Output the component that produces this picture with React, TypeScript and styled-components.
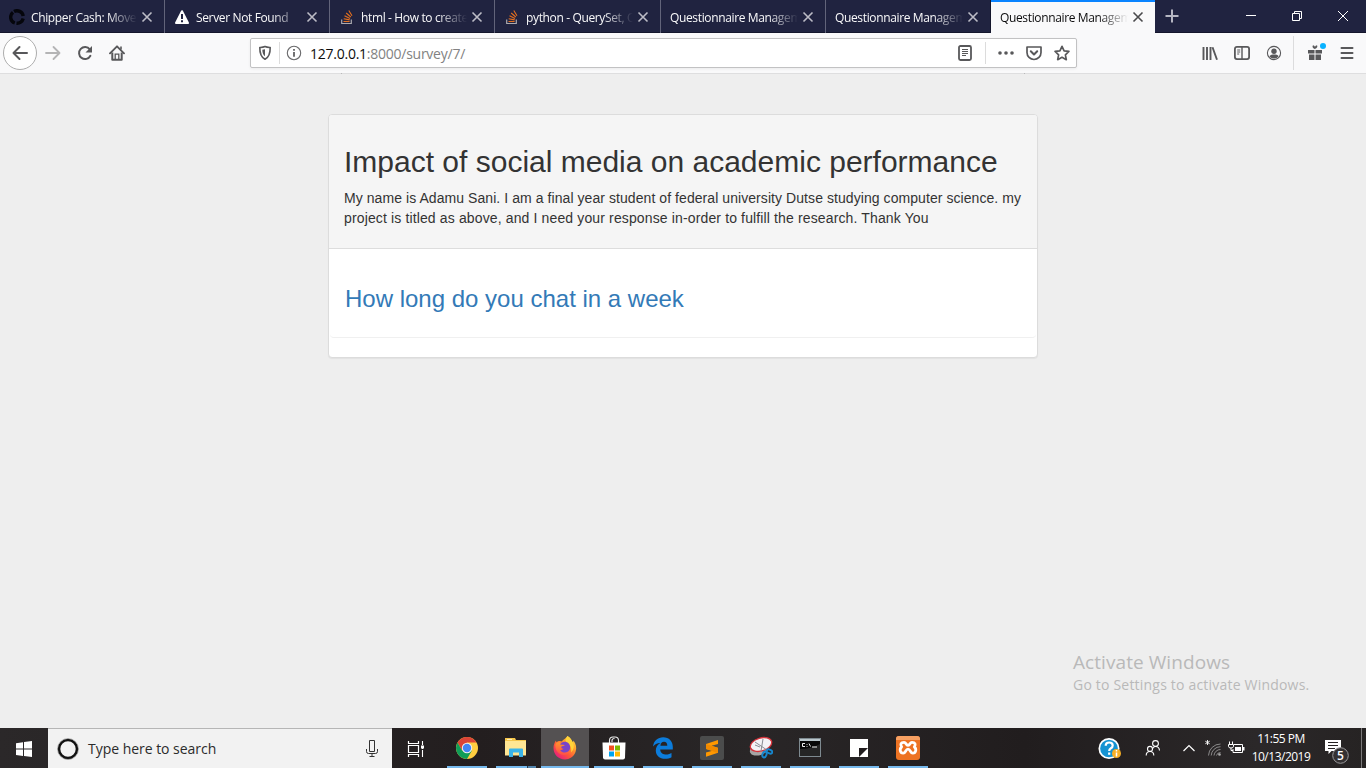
import React from "react";
import styled, { createGlobalStyle } from "styled-components";

const GlobalStyle = createGlobalStyle`
  * { box-sizing: border-box; }
  body { margin: 0; background: #eee; overflow: hidden; }
`;

const ui = `"Open Sans", "Noto Sans", sans-serif`;

const Screen = styled.div`
  width: 1366px;
  height: 768px;
  display: flex;
  flex-direction: column;
  overflow: hidden;
  font-family: ${ui};
`;

/* Tab strip */
const TabStrip = styled.div`
  height: 33px;
  display: flex;
  background: #202340;
  border-bottom: 1px solid #14162c;
`;

const TabBox = styled.div<{ $active?: boolean; $width: number; $last?: boolean }>`
  flex: none;
  width: ${(p) => p.$width}px;
  height: 33px;
  padding: 1px 7px 0 9px;
  display: flex;
  align-items: center;
  color: ${(p) => (p.$active ? "#0c0c0d" : "#f9f9fa")};
  background: ${(p) => (p.$active ? "#f9f9fa" : "transparent")};
  border-right: ${(p) => (p.$active ? "0" : p.$last ? "1px solid #14162c" : "1px solid #62647a")};
  box-shadow: ${(p) => (p.$active ? "inset 0 2px 0 #0a84ff" : "none")};
`;

const Favicon = styled.span`
  flex: none;
  width: 16px;
  height: 16px;
  margin-right: 6px;
  display: flex;
`;

const TabTitle = styled.span`
  flex: 1;
  min-width: 0;
  padding-top: 2px;
  overflow: hidden;
  white-space: nowrap;
  font-size: 12px;
  line-height: 18px;
  letter-spacing: -0.36px;
  mask-image: linear-gradient(to left, transparent 0, #000 30px);
`;

const CloseBox = styled.span`
  flex: none;
  width: 20px;
  height: 20px;
  display: flex;
  align-items: center;
  justify-content: center;
`;

const NewTab = styled.div`
  width: 34px;
  display: flex;
  align-items: center;
  justify-content: center;
`;

const WindowButtons = styled.div`
  margin-left: auto;
  display: flex;
`;

const WindowButton = styled.div`
  width: 46px;
  height: 32px;
  display: flex;
  align-items: center;
  justify-content: center;
`;

/* Navigation bar */
const NavBar = styled.div`
  height: 41px;
  flex: none;
  display: flex;
  align-items: center;
  padding: 0 3px 1px 3px;
  background: #f9f9fa;
  border-bottom: 1px solid #dededf;
`;

const ToolButton = styled.div<{ $width?: number }>`
  flex: none;
  width: ${(p) => p.$width ?? 32}px;
  height: 32px;
  display: flex;
  align-items: center;
  justify-content: center;
`;

const BackButton = styled(ToolButton)`
  width: 34px;
  height: 34px;
  border: 1px solid #adadad;
  border-radius: 50%;
  background: #fff;
`;

const BookmarkButton = styled(ToolButton)`
  width: 16px;
  margin: 0 6px 0 12px;
`;

const UrlBar = styled.div`
  width: 827px;
  height: 30px;
  margin-left: 117px;
  display: flex;
  align-items: center;
  background: #fff;
  border: 1px solid #c2c2c3;
  border-radius: 2px;
  box-shadow: 0 1px 3px rgba(0, 0, 0, 0.06);
`;

const UrlDivider = styled.span`
  width: 1px;
  height: 22px;
  background: #dcdcdc;
`;

const UrlText = styled.span`
  flex: 1;
  margin-left: 2px;
  padding-top: 2px;
  font-size: 14px;
  line-height: 20px;
  letter-spacing: -0.25px;
  color: #828282;
  b { font-weight: 400; color: #0c0c0d; }
`;

const ToolGroup = styled.div`
  margin-left: auto;
  display: flex;
  align-items: center;
`;

const BarDivider = styled.span`
  width: 1px;
  height: 34px;
  margin: 0 5px 0 3px;
  background: #dcdcdd;
`;

/* Page */
const Page = styled.main`
  position: relative;
  flex: 1;
  padding-top: 40px;
  background: #eee;
  font-family: "Liberation Sans", Arial, sans-serif;
`;

/* Bottom corners of the bar scrolled out above the panel */
const ScrolledEdge = styled.div`
  position: absolute;
  top: -1px;
  left: 341px;
  width: 684px;
  height: 1px;
  border: solid #b9b9ba;
  border-width: 0 1px;
`;

const Panel = styled.section`
  width: 710px;
  height: 244px;
  margin-left: 328px;
  background: #fff;
  border: 1px solid #dcdcdc;
  border-radius: 4px;
  box-shadow: 0 1px 1px rgba(0, 0, 0, 0.05);
`;

const PanelHeading = styled.header`
  height: 134px;
  padding: 30px 15px 0;
  background: #f5f5f5;
  border-bottom: 1px solid #ddd;
  border-radius: 3px 3px 0 0;
  color: #333;
`;

const Title = styled.h1`
  margin: 0 0 10px;
  font-size: 30px;
  font-weight: 400;
  line-height: 33px;
  white-space: nowrap;
`;

const Intro = styled.p`
  margin: 0;
  font-size: 14px;
  line-height: 20px;
  white-space: nowrap;
`;

const IntroLine = styled.span<{ $spacing: number }>`
  display: block;
  letter-spacing: ${(p) => p.$spacing}px;
`;

const Question = styled.div`
  height: 89px;
  margin: 0 1px;
  padding: 37px 15px 0;
  border-bottom: 1px solid #f0f0f0;
  border-radius: 0 0 4px 4px;
`;

const QuestionLink = styled.a`
  font-size: 24px;
  line-height: 26px;
  color: #337ab7;
`;

const Watermark = styled.div`
  position: absolute;
  left: 1073px;
  bottom: 33px;
  font-family: ${ui};
  color: #b9b9b9;
  white-space: nowrap;
`;

const WatermarkTitle = styled.div`
  font-size: 19px;
  line-height: 26px;
  letter-spacing: 0.07px;
`;

const WatermarkText = styled.div`
  font-size: 14px;
  line-height: 20px;
  letter-spacing: 0.2px;
`;

/* Taskbar */
const Taskbar = styled.footer`
  height: 40px;
  flex: none;
  display: flex;
  background: linear-gradient(90deg, #2b2829, #231e1f 35%, #292627 55%, #211d1e 75%, #2b2829 92%, #262323);
`;

const TaskCell = styled.div<{ $active?: boolean; $gap?: number }>`
  flex: none;
  width: 48px;
  height: 40px;
  margin-right: ${(p) => p.$gap ?? 0}px;
  display: flex;
  flex-direction: column;
  align-items: center;
  background: ${(p) => (p.$active ? "#545152" : "transparent")};
`;

const TaskIcon = styled.span`
  flex: 1;
  display: flex;
  align-items: center;
  padding-top: 2px;
`;

const Running = styled.span<{ $wide?: boolean; $stacked?: boolean }>`
  width: ${(p) => (p.$wide ? 48 : 40)}px;
  height: 2px;
  background: ${(p) => (p.$stacked ? "linear-gradient(90deg, #76b9ed 31px, #2a3b48 31px, #2a3b48 32px, #5385ad 32px)" : "#76b9ed")};
`;

const SearchBox = styled.div`
  flex: none;
  width: 344px;
  display: flex;
  align-items: center;
  padding: 0 12px 0 8px;
  background: #f2f2f2;
  border-top: 1px solid #b5b5b5;
  color: #2b2b2b;
`;

const SearchText = styled.span`
  flex: 1;
  margin-left: 8px;
  font-size: 14px;
  line-height: 20px;
  letter-spacing: -0.03px;
`;

const Tray = styled.div`
  margin-left: auto;
  display: flex;
  color: #fff;
`;

const TrayCell = styled.span<{ $width: number; $drop?: number }>`
  width: ${(p) => p.$width}px;
  padding-top: ${(p) => p.$drop ?? 0}px;
  display: flex;
  align-items: center;
  justify-content: center;
`;

const Clock = styled.div`
  width: 64px;
  padding-top: 2px;
  font-size: 12px;
  line-height: 18px;
  letter-spacing: -0.5px;
  text-align: center;
  white-space: nowrap;
`;

const DesktopEdge = styled.span`
  width: 5px;
  border-left: 1px solid #7b797a;
`;

const Drawing = styled.svg`
  display: block;
  flex: none;
`;

type SvgProps = { w?: number; h?: number; children: React.ReactNode };
const Svg = ({ w = 16, h = 16, children }: SvgProps) => (
  <Drawing width={w} height={h} viewBox={`0 0 ${w} ${h}`} fill="none">
    {children}
  </Drawing>
);

const INK = "#58585a";

const Close = ({ color }: { color: string }) => (
  <Svg w={12} h={12}><path d="M1.5 1.5 10.5 10.5M10.5 1.5 1.5 10.5" stroke={color} strokeWidth="1.6" /></Svg>
);

const ChipperIcon = () => (
  <Svg>
    <g stroke="#05060c" strokeWidth="3.4">
      <path d="M5.8 14A6.2 6.2 0 0 1 4 3.3" />
      <path d="M5 2.5A6.3 6.3 0 0 1 14.2 7" />
      <path d="M14.2 9.5A6.3 6.3 0 0 1 7.5 14.2" />
    </g>
  </Svg>
);

const WarningIcon = () => (
  <Svg>
    <path d="M8 2.2 14 14H2Z" fill="#fff" stroke="#fff" strokeWidth="2" strokeLinejoin="round" />
    <path d="M8 5v5M8 11.3v1.9" stroke="#202340" strokeWidth="2" />
  </Svg>
);

const StackIcon = () => (
  <Svg>
    <path d="M2.7 10.5v4h9.6v-4" stroke="#aaa9ae" strokeWidth="1.2" />
    <g stroke="#e5701f" strokeWidth="1.1">
      <path d="M4.5 12.5H10.6" />
      <path d="M4.7 9.7 10.7 10.9" />
      <path d="M5.5 6.8 11 9.4" />
      <path d="M7.2 4 11.8 8" />
      <path d="M9.8 1.5 13 6.8" />
    </g>
  </Svg>
);

const tabs: { title: string; icon?: React.ReactNode; width: number; active?: boolean; last?: boolean }[] = [
  { title: "Chipper Cash: Move", icon: <ChipperIcon />, width: 165 },
  { title: "Server Not Found", icon: <WarningIcon />, width: 165 },
  { title: "html - How to create", icon: <StackIcon />, width: 165 },
  { title: "python - QuerySet, O", icon: <StackIcon />, width: 166 },
  { title: "Questionnaire Managem", width: 165 },
  { title: "Questionnaire Managem", width: 165, last: true },
  { title: "Questionnaire Managem", width: 164, active: true },
];

const BackIcon = () => (
  <Svg><path d="M15 8H1.5M7.5 2 1.5 8l6 6" stroke={INK} strokeWidth="2" strokeLinecap="round" strokeLinejoin="round" /></Svg>
);
const ForwardIcon = () => (
  <Svg><path d="M1 8h13.5M8.5 2l6 6-6 6" stroke="#b4b4b5" strokeWidth="1.8" strokeLinecap="round" strokeLinejoin="round" /></Svg>
);
const ReloadIcon = () => (
  <Svg>
    <path d="M12.8 4.3A6 6 0 1 0 13.4 10.8" stroke={INK} strokeWidth="2" strokeLinecap="round" />
    <path d="M15 1v6.5H8.5Z" fill={INK} />
  </Svg>
);
const HomeIcon = () => (
  <Svg>
    <path d="M1 8.3 8 1.3l7 7" stroke={INK} strokeWidth="1.9" strokeLinecap="round" strokeLinejoin="round" />
    <path d="M3.3 7.5v7.3h9.4V7.5" stroke={INK} strokeWidth="2" strokeLinejoin="round" />
    <path d="M6.2 15V9.2h3.6V15" stroke={INK} strokeWidth="1.3" />
    <path d="M12 1.5v3" stroke={INK} strokeWidth="1.6" />
  </Svg>
);
const ShieldIcon = () => (
  <Svg>
    <path d="M8 1.5c-2 .9-3.7.9-5.2 1C2.7 9 4.2 12.3 8 14.3c3.8-2 5.3-5.3 5.2-11.8C11.7 2.4 10 2.4 8 1.5Z" stroke={INK} strokeWidth="1.6" strokeLinejoin="round" />
    <path d="M8 4.2c-1 .4-1.8.4-2.7.5.1 3.1.9 5.3 2.7 6.6Z" fill={INK} />
  </Svg>
);
const InfoIcon = () => (
  <Svg>
    <circle cx="8" cy="8" r="6.7" stroke="#6a6a6c" strokeWidth="1.1" />
    <path d="M8 7v4.8M8 4v1.8" stroke={INK} strokeWidth="1.7" />
  </Svg>
);
const ReaderIcon = () => (
  <Svg>
    <rect x="2" y="1" width="12" height="14" rx="1.5" stroke={INK} strokeWidth="1.8" />
    <path d="M5 4.5h6M5 6.5h6M5 8.5h6M5 10.5h4" stroke={INK} />
  </Svg>
);
const DotsIcon = () => (
  <Svg><g fill={INK}><circle cx="2" cy="8" r="1.8" /><circle cx="8" cy="8" r="1.8" /><circle cx="14" cy="8" r="1.8" /></g></Svg>
);
const PocketIcon = () => (
  <Svg>
    <path d="M1 2h14v5.5a7 7 0 0 1-14 0Z" stroke={INK} strokeWidth="1.7" strokeLinejoin="round" />
    <path d="m4.8 6.3 3.2 3.2 3.2-3.2" stroke={INK} strokeWidth="2" strokeLinecap="round" strokeLinejoin="round" />
  </Svg>
);
const StarIcon = () => (
  <Svg><path d="m8 1.3 2.1 4.5 4.8.6-3.5 3.4.9 4.9L8 12.300l-4.3 2.4.9-4.9L1.1 6.4l4.8-.6Z" stroke={INK} strokeWidth="1.7" strokeLinejoin="round" /></Svg>
);
const LibraryIcon = () => (
  <Svg><path d="M1.500 2v13M5 2v13M8.500 2v13M10.500 2.200l4.500 12.500" stroke={INK} strokeWidth="1.9" /></Svg>
);
const SidebarIcon = () => (
  <Svg>
    <rect x=".9" y="1.9" width="14.2" height="12.2" rx="2" stroke={INK} strokeWidth="1.8" />
    <path d="M8 2v12" stroke={INK} strokeWidth="1.4" />
    <path d="M3.2 5h3M3.2 7h3M3.2 9h2" stroke={INK} />
  </Svg>
);
const AccountIcon = () => (
  <Svg>
    <circle cx="8" cy="8" r="6.6" stroke={INK} strokeWidth="1.1" />
    <circle cx="8" cy="6.3" r="2.7" fill={INK} />
    <path d="M3.4 11.2c1-1.4 2.4-1.7 4.6-1.7s3.6.3 4.6 1.7A5.5 5.5 0 0 1 8 13.4a5.5 5.5 0 0 1-4.6-2.2Z" fill={INK} />
  </Svg>
);
const GiftIcon = () => (
  <Svg w={22} h={20}>
    <path d="M4 7h6.500v3.500H4ZM11.500 7H18v3.500h-6.500ZM5 11.500h5.500V17H5ZM11.500 11.500H17V17h-5.500Z" fill={INK} />
    <path d="M10.800 6C8.500 5.200 8 3.500 9 2.300c.9.1 1.700.8 2 1.700.3-.9 1-1.600 2-1.700.9 1.200.2 2.900-2.200 3.700Z" fill={INK} />
    <circle cx="19" cy="3" r="3" fill="#0ab2ff" />
  </Svg>
);
const MenuIcon = () => (
  <Svg><path d="M2.5 3h11M2.5 8h11M2.5 13h11" stroke={INK} strokeWidth="2" strokeLinecap="round" /></Svg>
);

const WindowsIcon = () => (
  <Svg><g fill="#fff"><path d="M0 2.2 7 1.2v6.4H0ZM8 1 16 0v7.6H8ZM0 8.6h7V15L0 14ZM8 8.600h8V16L8 15Z" /></g></Svg>
);
const CortanaIcon = () => (
  <Svg w={24} h={24}>
    <circle cx="12" cy="12" r="9" stroke="#111" strokeWidth="2.6" />
    <circle cx="12" cy="12" r="10.5" stroke="#8a8a8a" strokeWidth=".6" />
  </Svg>
);
const MicIcon = () => (
  <Svg w={16} h={18}>
    <path d="M5.500.500h5v11h-5Z" stroke="#333" />
    <path d="M2.5 9v2.5q0 2 2 2h7q2 0 2-2V9M8 13.5v3M5.5 16.5h5" stroke="#333" />
  </Svg>
);
const TaskViewIcon = () => (
  <Svg w={18} h={18}>
    <path d="M1.5 1v2.5h10V1M1.5 17v-2.5h10V17M1.5 5.5h10v7h-10Z" stroke="#fff" strokeWidth="1.2" />
    <path d="M15.5 1v16" stroke="#fff" strokeWidth="1.1" strokeDasharray="4 1 3 1 8" />
    <path d="M14 5.5h3v3h-3Z" fill="#fff" />
  </Svg>
);
const ChromeIcon = () => (
  <Svg w={22} h={22}>
    <circle cx="11" cy="11" r="11" fill="#ffcd40" />
    <path d="M11 11 6.2 13.7 1.5 5.5A11 11 0 0 1 20.5 5.5H11Z" fill="#db4437" />
    <path d="M1.5 5.5A11 11 0 0 0 11 22l4.8-8.3L11 11l-4.8 2.7Z" fill="#0f9d58" />
    <circle cx="11" cy="11" r="5.2" fill="#f1f1f1" />
    <circle cx="11" cy="11" r="4.2" fill="#4285f4" />
  </Svg>
);
const FolderIcon = () => (
  <Svg w={22} h={20}>
    <path d="M0 0h10l1 2h10v2H0Z" fill="#f5c64c" />
    <path d="M2 1h5v1H2Z" fill="#fff1b8" />
    <path d="M0 3h21v14.5H0Z" fill="#ffe694" />
    <path d="M4 11.5q0-1 1-1h12q1 0 1 1V19h-4v-4.500H8V19H4Z" fill="#3bb4e8" />
  </Svg>
);
const FirefoxIcon = () => (
  <Svg w={24} h={24}>
    <defs>
      <linearGradient id="flame" x1="1" y1="0" x2=".2" y2="1">
        <stop offset="0" stopColor="#fff44f" /><stop offset=".35" stopColor="#ffa52b" />
        <stop offset=".65" stopColor="#ff5a36" /><stop offset="1" stopColor="#e31587" />
      </linearGradient>
      <linearGradient id="mane" x1=".5" y1="0" x2=".3" y2="1">
        <stop offset="0" stopColor="#ff9a2a" /><stop offset="1" stopColor="#ff4a4a" />
      </linearGradient>
    </defs>
    <path d="M14.5 0c4 2.5 4 4.5 5.5 6.5l.5-2C23 8 24 12 22.5 16c-1.8 4.7-6 7.5-10.5 7.5C5.5 23.5.5 18.5.5 12c0-3 1-5.5 2.5-7.5l.4 1.8C5 4.8 7.500 4.500 9 5.500c1-2 3-2 5.500-5.500Z" fill="url(#flame)" />
    <path d="M2.5 8C4 5.5 7.5 5.800 9 8l3 .6c0 1.5-2.2 1.300-3.200 2.400-.5 1 .2 2-.3 2.500 1.500 2.500 6 2 8.500-1 .2 4-2.500 6.500-6 6.500C5.500 19 1.500 13.500 2.500 8Z" fill="url(#mane)" />
    <path d="M14.5 0c4 2.500 4 4.500 5.500 6.500 1.500 3.500 1 7-2 10 1-4-.5-7.500-3.500-9.500s-2-4 0-7Z" fill="#ffd43a" />
    <path d="M7 8.500c1.500-3 6-4 8.500-1.300 2.500 2.800 2 6.800-.8 8.600-2.500 1.500-6 .8-7.500-1.500 1.500-.2 2.800-.5 3.300-1.500-2-.3-2.700-1.500-2-2.300.8-.5 2.500-.3 3.300-1.500Z" fill="#7a45c8" />
  </Svg>
);
const StoreIcon = () => (
  <Svg w={24} h={24}>
    <path d="M7.5 7V4.500Q7.500 1 11 1h2q3.500 0 3.500 3.500V7M10 6V4.500Q10 2.500 12.500 2.500" stroke="#eee" strokeWidth="1.1" />
    <path d="M.5 6.500h23l-.5 15q-.1 2-2 2H3q-1.900 0-2-2Z" fill="#fff" />
    <path d="M7 9.500h5v5H7Z" fill="#f25022" /><path d="M13 9.500h5v5h-5Z" fill="#7fba00" />
    <path d="M7 15.500h5v5H7Z" fill="#00a4ef" /><path d="M13 15.500h5v5h-5Z" fill="#ffb900" />
  </Svg>
);
const EdgeIcon = () => (
  <Svg w={20} h={22}>
    <path d="M0 9.500C.8 3.800 4.800.3 10.200.3c5.900 0 9.600 4.200 9.600 9.400v2.800H7.200c.2 3.800 3.300 5 6 5 2.100 0 3.900-.6 5.300-1.500v4.200c-1.700 1-4 1.600-6.400 1.600-5.600 0-9.300-3.300-9.300-8.300 0-3.400 1.700-6.100 4.800-7.600C3.900 6 1.500 7.400 0 9.500Zm7.400-.7h6.900c0-2.600-1.200-4-3.300-4s-3.300 1.500-3.600 4Z" fill="#0c7cdb" />
  </Svg>
);
const SublimeIcon = () => (
  <Svg w={24} h={24}>
    <rect width="24" height="24" rx="2" fill="#4b4c4c" />
    <path d="M18 4 6 8v5l6.500 1.700L6 16.500v4.300l12-4v-5l-6.500-2L18 8Z" fill="#ff9800" />
    <path d="M6 13l12 4v-5L6 8Z" fill="#f08a00" />
  </Svg>
);
const SnipIcon = () => (
  <Svg w={24} h={24}>
    <ellipse cx="10.5" cy="13" rx="10" ry="6" fill="#a5a5a5" transform="rotate(-20 10.5 13)" />
    <ellipse cx="12" cy="8.5" rx="11" ry="6.5" fill="#f3f3f6" stroke="#d4333b" strokeWidth="1.3" transform="rotate(-17 12 8.5)" />
    <path d="m6 6 12 8M14 3l-2 12M6 9l5 2" stroke="#888b92" />
    <g stroke="#1687cf" strokeWidth="1.9"><ellipse cx="15.5" cy="18.5" rx="2" ry="3" transform="rotate(20 15.5 18.5)" /><ellipse cx="20.5" cy="15.5" rx="3" ry="1.9" transform="rotate(25 20.5 15.5)" /></g>
  </Svg>
);
const ConsoleIcon = () => (
  <Svg w={22} h={20}>
    <rect x=".5" y=".5" width="21" height="18" fill="#080808" stroke="#7e8a90" />
    <path d="M1 1h20v2H1Z" fill="#bac7cc" />
    <path d="M1 11Q12 11 21 6v12H1Z" fill="#252525" />
    <path d="M6 5.5H3.5v3H6M8 6v.8M8 8v.8M10 5.5l1.5 3M13 9h5" stroke="#eee" />
  </Svg>
);
const NoteIcon = () => (
  <Svg w={18} h={18}><path d="M0 0h18v18H0Z" fill="#fff" /><path d="M9 9h9l-9 9Z" fill="#211d1e" /></Svg>
);
const XamppIcon = () => (
  <Svg w={24} h={24}>
    <rect width="24" height="24" rx="3" fill="#ed7323" />
    <path d="M0 3q0-3 3-3h18q3 0 3 3v1H0Z" fill="#f6a062" />
    <path d="M8 6.300c-3 0-4.200 2.300-2.300 4.500-2.500 2-1.700 6.400 1.500 6.400 2.500 0 2.300-4 4.800-4s2.300 4 4.800 4c3.200 0 4-4.400 1.500-6.400 1.900-2.200.7-4.500-2.300-4.500-2.300 0-1.700 3-4 3s-1.700-3-4-3Z" stroke="#fff" strokeWidth="2.8" strokeLinejoin="round" />
  </Svg>
);

const HelpIcon = () => (
  <Svg w={24} h={24}>
    <circle cx="11" cy="11.5" r="9.7" fill="#1593d2" stroke="#fff" strokeWidth="1.7" />
    <path d="M7.7 8.7q0-3.200 3.500-3.200t3.500 3q0 1.700-1.800 2.800T11.200 14M11.200 15.500v2.200" stroke="#fff" strokeWidth="2.2" />
    <circle cx="18.500" cy="16.500" r="4.500" fill="#f7af25" />
    <path d="M18.500 15.500v4M18.500 13v1.500" stroke="#fff" strokeWidth="1.500" />
  </Svg>
);
const PeopleIcon = () => (
  <Svg>
    <g stroke="#fff" strokeWidth="1.1">
      <circle cx="10.5" cy="3.5" r="2.900" /><path d="M8 8.200Q9 6.500 10.500 6.500q3.700 0 4 4" />
      <circle cx="5" cy="8.900" r="2.500" /><path d="M1.200 15.500q0-4 3.800-4t3.800 4" />
    </g>
  </Svg>
);
const WifiIcon = () => (
  <Svg>
    <g stroke="#8a898a">
      <path d="M3.500 15.500A12 12 0 0 1 15.500 4M6.200 15.500A9.300 9.300 0 0 1 15.500 6.700M9 15.500A6.500 6.500 0 0 1 15.500 9.500M11.500 15.500q.5-2.800 4-3" />
    </g>
    <circle cx="14.5" cy="14.5" r="1.3" fill="#aaa" />
    <path d="M2.5 0v5M.3 1.2l4.4 2.6M4.7 1.2.3 3.8" stroke="#fff" strokeWidth=".9" />
  </Svg>
);
const BatteryIcon = () => (
  <Svg w={17}>
    <path d="M6 4.500h8.500v8h-9.500V9" stroke="#fff" /><path d="M7 7h6v4H7ZM15 7h1.500v3.500H15Z" fill="#fff" />
    <path d="M1.500 1.500v2.500M4.500 1.500v2.500" stroke="#fff" />
    <path d="M.5 4.500h5v1.800q0 1.700-2.500 1.700T.5 6.300ZM3 8v2.500h2" stroke="#fff" />
  </Svg>
);
const ActionIcon = () => (
  <Svg w={26} h={26}>
    <path d="M1 1h16v11H7.500L4.500 15v-3H1Z" fill="#fff" />
    <path d="M4 3.500h10M4 6.500h10M4 9.500h7" stroke="#272324" />
    <circle cx="16.5" cy="16.5" r="7.800" fill="#343132" stroke="#99989a" />
    <text x="16.5" y="21" textAnchor="middle" fontSize="12" fontWeight="600" fill="#fff" fontFamily={ui}>5</text>
  </Svg>
);

const apps: { icon: React.ReactNode; active?: boolean; stacked?: boolean }[] = [
  { icon: <ChromeIcon /> },
  { icon: <FolderIcon />, stacked: true },
  { icon: <FirefoxIcon />, active: true },
  { icon: <StoreIcon /> },
  { icon: <EdgeIcon /> },
  { icon: <SublimeIcon /> },
  { icon: <SnipIcon /> },
  { icon: <ConsoleIcon /> },
  { icon: <NoteIcon /> },
  { icon: <XamppIcon /> },
];

export default function App() {
  return (
    <Screen>
      <GlobalStyle />
      <TabStrip>
        {tabs.map((t, i) => (
          <TabBox key={i} $width={t.width} $active={t.active} $last={t.last}>
            {t.icon && <Favicon>{t.icon}</Favicon>}
            <TabTitle>{t.title}</TabTitle>
            <CloseBox><Close color={t.active ? "#4a4a4c" : "#bcbcc6"} /></CloseBox>
          </TabBox>
        ))}
        <NewTab>
          <Svg><path d="M8 1.5v13M1.5 8h13" stroke="#b5b6c2" strokeWidth="2" /></Svg>
        </NewTab>
        <WindowButtons>
          <WindowButton><Svg w={10} h={10}><path d="M0 4.5h10" stroke="#fff" /></Svg></WindowButton>
          <WindowButton><Svg w={10} h={10}><path d="M.5 2.5h7v7h-7ZM2.5 2.5v-2h7v7h-2" stroke="#fff" /></Svg></WindowButton>
          <WindowButton><Svg w={10} h={10}><path d="m0 0 10 10M10 0 0 10" stroke="#fff" /></Svg></WindowButton>
        </WindowButtons>
      </TabStrip>

      <NavBar>
        <BackButton><BackIcon /></BackButton>
        <ToolButton><ForwardIcon /></ToolButton>
        <ToolButton><ReloadIcon /></ToolButton>
        <ToolButton><HomeIcon /></ToolButton>
        <UrlBar>
          <ToolButton $width={28}><ShieldIcon /></ToolButton>
          <UrlDivider />
          <ToolButton $width={28}><InfoIcon /></ToolButton>
          <UrlText><b>127.0.0.1</b>:8000/survey/7/</UrlText>
          <ToolButton $width={40}><ReaderIcon /></ToolButton>
          <UrlDivider />
          <ToolButton $width={40}><DotsIcon /></ToolButton>
          <ToolButton $width={16}><PocketIcon /></ToolButton>
          <BookmarkButton><StarIcon /></BookmarkButton>
        </UrlBar>
        <ToolGroup>
          <ToolButton><LibraryIcon /></ToolButton>
          <ToolButton><SidebarIcon /></ToolButton>
          <ToolButton><AccountIcon /></ToolButton>
          <BarDivider />
          <ToolButton><GiftIcon /></ToolButton>
          <ToolButton><MenuIcon /></ToolButton>
        </ToolGroup>
      </NavBar>

      <Page>
        <ScrolledEdge />
        <Panel>
          <PanelHeading>
            <Title>Impact of social media on academic performance</Title>
            <Intro>
              <IntroLine $spacing={0.067}>
                My name is Adamu Sani. I am a final year student of federal university Dutse studying computer science. my
              </IntroLine>
              <IntroLine $spacing={0.135}>
                project is titled as above, and I need your response in-order to fulfill the research. Thank You
              </IntroLine>
            </Intro>
          </PanelHeading>
          <Question><QuestionLink>How long do you chat in a week</QuestionLink></Question>
        </Panel>
        <Watermark>
          <WatermarkTitle>Activate Windows</WatermarkTitle>
          <WatermarkText>Go to Settings to activate Windows.</WatermarkText>
        </Watermark>
      </Page>

      <Taskbar>
        <TaskCell><TaskIcon><WindowsIcon /></TaskIcon></TaskCell>
        <SearchBox>
          <CortanaIcon />
          <SearchText>Type here to search</SearchText>
          <MicIcon />
        </SearchBox>
        <TaskCell $gap={3}><TaskIcon><TaskViewIcon /></TaskIcon></TaskCell>
        {apps.map((a, i) => (
          <TaskCell key={i} $active={a.active} $gap={1}>
            <TaskIcon>{a.icon}</TaskIcon>
            <Running $wide={a.active} $stacked={a.stacked} />
          </TaskCell>
        ))}
        <Tray>
          <TrayCell $width={38} $drop={2}><HelpIcon /></TrayCell>
          <TrayCell $width={47}><PeopleIcon /></TrayCell>
          <TrayCell $width={26}><Svg w={12} h={8}><path d="m.5 7 5.5-5.500L11.5 7" stroke="#fff" strokeWidth="1.2" /></Svg></TrayCell>
          <TrayCell $width={22}><WifiIcon /></TrayCell>
          <TrayCell $width={25}><BatteryIcon /></TrayCell>
          <Clock>11:55 PM<br />10/13/2019</Clock>
          <TrayCell $width={48} $drop={8}><ActionIcon /></TrayCell>
          <DesktopEdge />
        </Tray>
      </Taskbar>
    </Screen>
  );
}
